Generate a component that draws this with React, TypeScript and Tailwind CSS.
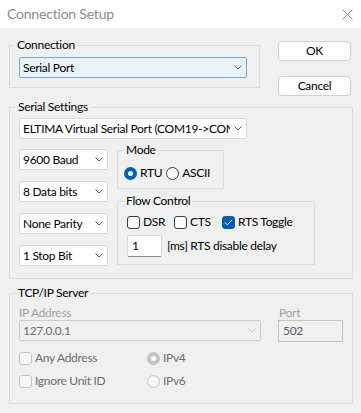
import React from 'react';

const font = { fontFamily: 'Lato, "Segoe UI", "Liberation Sans", Arial, sans-serif' };

function Chevron({ disabled }: { disabled?: boolean }) {
  return (
    <svg width="8" height="5" viewBox="0 0 8 5" className="shrink-0">
      <path d="M0.5 0.5 L4 4 L7.5 0.5" fill="none" stroke={disabled ? '#c4c4c4' : '#606060'} strokeWidth="1" />
    </svg>
  );
}

function Combo({ text, className, focused, disabled }: { text: string; className: string; focused?: boolean; disabled?: boolean }) {
  const tone = focused
    ? 'bg-[#eaf3fc] border-[#74a9dd]'
    : disabled
      ? 'bg-[#f0f0f0] border-[#cccccc] text-[#6d6d6d]'
      : 'bg-white border-[#d9d9d9]';
  return (
    <div className={`flex h-[21px] items-center overflow-hidden rounded-[2px] border pl-[3px] pr-[4px] ${tone} ${className}`}>
      <span className="min-w-0 flex-1 overflow-hidden whitespace-nowrap">{text}</span>
      <span className="pl-[4px]">
        <Chevron disabled={disabled} />
      </span>
    </div>
  );
}

function Check({ label, checked, disabled, className = '' }: { label: string; checked?: boolean; disabled?: boolean; className?: string }) {
  return (
    <div className={`flex h-[16px] items-center gap-[3px] ${disabled ? 'text-[#6d6d6d]' : ''} ${className}`}>
      <span
        className={`flex h-[13px] w-[13px] shrink-0 items-center justify-center rounded-[3px] border ${
          checked ? 'border-[#005fb8] bg-[#005fb8]' : disabled ? 'border-[#c2c2c2] bg-[#f6f6f6]' : 'border-[#3c3c3c] bg-[#fbfbfb]'
        }`}
      >
        {checked && (
          <svg width="9" height="7" viewBox="0 0 9 7">
            <path d="M1 3.5 L3.3 5.8 L8 1" fill="none" stroke="white" strokeWidth="1" />
          </svg>
        )}
      </span>
      <span className="whitespace-nowrap">{label}</span>
    </div>
  );
}

function Radio({ label, checked, disabled, className = '' }: { label: string; checked?: boolean; disabled?: boolean; className?: string }) {
  let ring = 'border border-[#3c3c3c] bg-[#fbfbfb]';
  if (checked) ring = disabled ? 'bg-[#c5c5c5]' : 'bg-[#005fb8]';
  else if (disabled) ring = 'border border-[#c2c2c2] bg-[#f6f6f6]';
  return (
    <div className={`flex h-[16px] items-center gap-[3px] ${disabled ? 'text-[#6d6d6d]' : ''} ${className}`}>
      <span className={`flex h-[13px] w-[13px] shrink-0 items-center justify-center rounded-full ${ring}`}>
        {checked && <span className="h-[5px] w-[5px] rounded-full bg-white" />}
      </span>
      <span className="whitespace-nowrap">{label}</span>
    </div>
  );
}

function Legend({ children, className }: { children: React.ReactNode; className: string }) {
  return <legend className={`px-[2px] leading-[14px] ${className}`}>{children}</legend>;
}

function Button({ children }: { children: React.ReactNode }) {
  return (
    <button
      type="button"
      className="flex h-[20px] w-[73px] items-center justify-center rounded-[4px] border border-[#d0d0d0] bg-[#fdfdfd] text-[12px] leading-none"
    >
      {children}
    </button>
  );
}

export default function App() {
  return (
    <div
      className="flex h-[413px] w-[361px] flex-col bg-[#f0f0f0] text-[12px] leading-[14px] tracking-[-0.3px] text-black"
      style={font}
    >
      <div className="flex h-[28px] shrink-0 items-center justify-between bg-white pl-[7px] pr-[8px]">
        <span className="text-[14px] tracking-[-0.2px] text-[#8c8c8c]">Connection Setup</span>
        <svg width="11" height="11" viewBox="0 0 11 11">
          <path d="M0.5 0.5 L10.5 10.5 M10.5 0.5 L0.5 10.5" stroke="#8c8c8c" strokeWidth="1" />
        </svg>
      </div>

      <div className="flex flex-col pl-[9px] pr-[9px] pt-[10px]">
        <div className="flex items-start gap-[18px]">
          <fieldset className="w-[251px] border border-[#dcdcdc] px-[9px] pb-[9px] pt-[5px]">
            <Legend className="-ml-[4px]">Connection</Legend>
            <Combo text="Serial Port" focused className="w-[228px]" />
          </fieldset>
          <div className="flex flex-col gap-[15px] pt-[3px]">
            <Button>OK</Button>
            <Button>Cancel</Button>
          </div>
        </div>

        <fieldset className="mt-[4px] w-[344px] border border-[#dcdcdc] px-[9px] pb-[12px] pt-[4px]">
          <Legend className="-ml-[3px]">Serial Settings</Legend>
          <Combo text="ELTIMA Virtual Serial Port (COM19->COM20)" className="w-[228px]" />
          <div className="mt-[4px] flex gap-[9px]">
            <div className="mt-[6px] flex w-[89px] flex-col gap-[11px]">
              <Combo text="9600 Baud" className="w-[89px]" />
              <Combo text="8 Data bits" className="w-[89px]" />
              <Combo text="None Parity" className="w-[89px]" />
              <Combo text="1 Stop Bit" className="w-[89px]" />
            </div>
            <div className="flex flex-col gap-[5px]">
              <fieldset className="w-[107px] border border-[#dcdcdc] pb-[7px] pl-[6px] pt-[8px]">
                <Legend className="ml-0">Mode</Legend>
                <div className="flex gap-[4px]">
                  <Radio label="RTU" checked />
                  <Radio label="ASCII" />
                </div>
              </fieldset>
              <fieldset className="w-[198px] border border-[#dcdcdc] pb-[7px] pl-[9px] pt-[6px]">
                <Legend className="-ml-[3px]">Flow Control</Legend>
                <div className="flex">
                  <Check label="DSR" className="w-[47px]" />
                  <Check label="CTS" className="w-[48px]" />
                  <Check label="RTS Toggle" checked />
                </div>
                <div className="mt-[5px] flex items-center gap-[5px]">
                  <div className="flex h-[22px] w-[35px] items-center rounded-[2px] border border-[#d9d9d9] border-b-[#8a8a8a] bg-white pl-[4px]">1</div>
                  <span className="whitespace-nowrap">[ms] RTS disable delay</span>
                </div>
              </fieldset>
            </div>
          </div>
        </fieldset>

        <fieldset className="mt-[7px] w-[344px] border border-[#dcdcdc] px-[9px] pb-[14px] pt-[6px]">
          <Legend className="-ml-[3px]">TCP/IP Server</Legend>
          <div className="flex gap-[17px]">
            <div className="flex flex-col">
              <span className="text-[#a0a0a0]">IP Address</span>
              <Combo text="127.0.0.1" disabled className="w-[242px]" />
            </div>
            <div className="flex flex-col">
              <span className="pl-[1px] text-[#a0a0a0]">Port</span>
              <div className="flex h-[22px] w-[65px] items-center border border-[#c4c4c4] bg-[#f0f0f0] pl-[4px] text-[#5a5a6e]">502</div>
            </div>
          </div>
          <div className="mt-[8px] flex flex-col gap-[7px]">
            <div className="flex">
              <Check label="Any Address" disabled className="w-[128px]" />
              <Radio label="IPv4" checked disabled />
            </div>
            <div className="flex">
              <Check label="Ignore Unit ID" disabled className="w-[128px]" />
              <Radio label="IPv6" disabled />
            </div>
          </div>
        </fieldset>
      </div>
    </div>
  );
}
